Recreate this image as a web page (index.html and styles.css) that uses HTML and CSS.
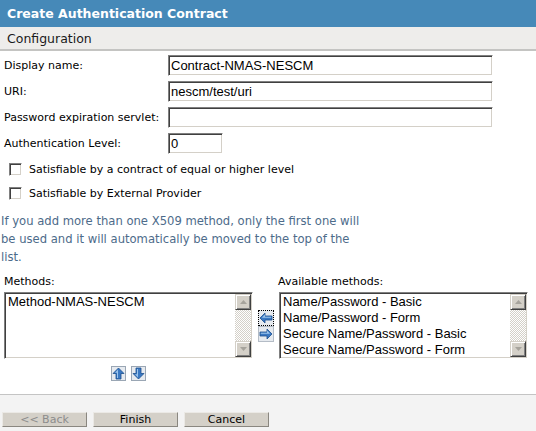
FILE: index.html
```html
<!DOCTYPE html>
<html>
<head>
<meta charset="utf-8">
<title>Create Authentication Contract</title>
<link rel="stylesheet" href="styles.css">
</head>
<body>
<div class="page">
  <div class="title">Create Authentication Contract</div>
  <div class="section">Configuration</div>

  <div class="form">
    <div class="lbl">Display name:</div>
    <div class="field">Contract-NMAS-NESCM</div>
    <div class="lbl">URI:</div>
    <div class="field">nescm/test/uri</div>
    <div class="lbl">Password expiration servlet:</div>
    <div class="field"></div>
    <div class="lbl">Authentication Level:</div>
    <div class="field short">0</div>
  </div>

  <div class="checks">
    <div class="check"><span class="box"></span><span>Satisfiable by a contract of equal or higher level</span></div>
    <div class="check"><span class="box"></span><span>Satisfiable by External Provider</span></div>
  </div>

  <p class="info">If you add more than one X509 method, only the first one will be used and it will automatically be moved to the top of the list.</p>

  <div class="methods">
    <div class="mlabel">Methods:</div>
    <div class="mlabel right">Available methods:</div>

    <div class="list left-list">
      <div class="items">
        <div>Method-NMAS-NESCM</div>
      </div>
      <div class="sbar">
        <span class="sbtn"><svg width="7" height="4" viewBox="0 0 7 4"><path d="M3.5 0 L7 4 H0 Z" fill="#a6a39c"/></svg></span>
        <span class="track"></span>
        <span class="sbtn"><svg width="7" height="4" viewBox="0 0 7 4"><path d="M0 0 H7 L3.5 4 Z" fill="#a6a39c"/></svg></span>
      </div>
    </div>

    <div class="move">
      <span class="mbtn focus"><svg width="14" height="14" viewBox="0 0 14 14"><path d="M1 7 L6 2 V5 H13 V9 H6 V12 Z" fill="#3a78c2" stroke="#1c4f8e" stroke-width="0.8"/><path d="M3 6.5 L6 3.6 V5.8 H12.2 V6.8 H3.5 Z" fill="#9cc4ec"/></svg></span>
      <span class="mbtn"><svg width="14" height="14" viewBox="0 0 14 14"><path d="M13 7 L8 2 V5 H1 V9 H8 V12 Z" fill="#3a78c2" stroke="#1c4f8e" stroke-width="0.8"/><path d="M11 6.5 L8 3.6 V5.8 H1.8 V6.8 H10.5 Z" fill="#9cc4ec"/></svg></span>
    </div>

    <div class="list right-list">
      <div class="items">
        <div>Name/Password - Basic</div>
        <div>Name/Password - Form</div>
        <div>Secure Name/Password - Basic</div>
        <div>Secure Name/Password - Form</div>
      </div>
      <div class="sbar">
        <span class="sbtn"><svg width="7" height="4" viewBox="0 0 7 4"><path d="M3.5 0 L7 4 H0 Z" fill="#a6a39c"/></svg></span>
        <span class="track"></span>
        <span class="sbtn"><svg width="7" height="4" viewBox="0 0 7 4"><path d="M0 0 H7 L3.5 4 Z" fill="#a6a39c"/></svg></span>
      </div>
    </div>

    <div class="order">
      <span class="obtn"><svg width="13" height="13" viewBox="0 0 13 13"><path d="M6.5 1 L12 6.5 H9 V12 H4 V6.5 H1 Z" fill="#3a78c2" stroke="#1c4f8e" stroke-width="0.8"/><path d="M6 2.5 L3 5.8 H5 V11 H6 Z" fill="#9cc4ec"/></svg></span>
      <span class="obtn"><svg width="13" height="13" viewBox="0 0 13 13"><path d="M6.5 12 L12 6.5 H9 V1 H4 V6.5 H1 Z" fill="#3a78c2" stroke="#1c4f8e" stroke-width="0.8"/><path d="M6 10.5 L3 7.2 H5 V2 H6 Z" fill="#9cc4ec"/></svg></span>
    </div>
  </div>

  <div class="footer">
    <button class="btn disabled">&lt;&lt; Back</button>
    <button class="btn">Finish</button>
    <button class="btn">Cancel</button>
  </div>
</div>
</body>
</html>
```

FILE: styles.css
```css
body {
  margin: 0;
  background: #fff;
}

.page {
  width: 536px;
  height: 431px;
  overflow: hidden;
  display: flex;
  flex-direction: column;
  font-family: "DejaVu Sans", Verdana, sans-serif;
  font-size: 11px;
  color: #000;
  background: #fff;
}

.title {
  height: 27px;
  line-height: 27px;
  background: #4689b8;
  color: #fff;
  font-weight: bold;
  font-size: 12.5px;
  padding-left: 7px;
  flex: none;
}

.section {
  height: 22px;
  line-height: 23px;
  background: #eeedeb;
  border-bottom: 2px solid #c4c4c2;
  font-size: 12.5px;
  padding-left: 7px;
  color: #1a1a1a;
  flex: none;
}

.form {
  display: grid;
  grid-template-columns: 164px auto;
  row-gap: 5px;
  padding: 4px 0 0 4px;
  align-items: center;
  justify-items: start;
}

.field {
  box-sizing: border-box;
  height: 21px;
  width: 325px;
  border: 1px solid;
  border-color: #808080 #fff #fff #808080;
  box-shadow: inset 1px 1px #404040, inset -1px -1px #d4d0c8;
  font-family: "Liberation Sans", Arial, sans-serif;
  font-size: 13px;
  line-height: 19px;
  padding-left: 2px;
  white-space: nowrap;
}

.field.short {
  width: 55px;
}

.checks {
  padding: 3px 0 0 9px;
}

.check {
  height: 24px;
  display: flex;
  align-items: center;
  gap: 7px;
}

.box {
  width: 13px;
  height: 13px;
  box-sizing: border-box;
  border: 1px solid;
  border-color: #808080 #fff #fff #808080;
  box-shadow: inset 1px 1px #404040, inset -1px -1px #d4d0c8;
  background: #fff;
  flex: none;
}

.info {
  margin: 7px 0 0;
  padding-left: 1px;
  width: 366px;
  font-size: 11.6px;
  line-height: 18px;
  color: #4d6b8a;
}

.methods {
  display: grid;
  grid-template-columns: 249px 16px 249px;
  grid-template-rows: 18px 67px auto;
  column-gap: 5px;
  padding: 8px 0 0 4px;
}

.mlabel {
  line-height: 16px;
  grid-row: 1;
  grid-column: 1;
}

.mlabel.right {
  grid-column: 3;
  margin-left: -1px;
}

.list {
  grid-row: 2;
  box-sizing: border-box;
  height: 67px;
  border: 1px solid;
  border-color: #808080 #fff #fff #808080;
  box-shadow: inset 1px 1px #404040, inset -1px -1px #d4d0c8;
  padding: 1px;
  display: flex;
  background: #fff;
}

.left-list {
  grid-column: 1;
}

.right-list {
  grid-column: 3;
}

.items {
  flex: 1;
  font-family: "Liberation Sans", Arial, sans-serif;
  font-size: 13px;
  line-height: 16px;
  padding: 0 0 0 2px;
  white-space: nowrap;
  overflow: hidden;
}

.sbar {
  width: 16px;
  display: flex;
  flex-direction: column;
}

.track {
  flex: 1;
  background: repeating-conic-gradient(#d4d0c8 0 25%, #fff 0 50%) 0 0 / 2px 2px;
}

.sbtn {
  height: 16px;
  box-sizing: border-box;
  background: #d4d0c8;
  border: 1px solid;
  border-color: #d4d0c8 #404040 #404040 #d4d0c8;
  box-shadow: inset 1px 1px #fff, inset -1px -1px #808080;
  display: flex;
  align-items: center;
  justify-content: center;
}

.move {
  grid-row: 2;
  grid-column: 2;
  display: flex;
  flex-direction: column;
  justify-content: center;
}

.mbtn {
  width: 16px;
  height: 16px;
  box-sizing: border-box;
  border: 1px solid #b4bcc6;
  background: #e6eaef;
  display: flex;
  align-items: center;
  justify-content: center;
}

.mbtn.focus {
  border: 1px dotted #000;
}

.order {
  grid-row: 3;
  grid-column: 1;
  display: flex;
  justify-content: center;
  gap: 5px;
  padding-top: 7px;
}

.obtn {
  width: 15px;
  height: 15px;
  box-sizing: border-box;
  border: 1px solid #9aa6b4;
  background: #e6eaef;
  display: flex;
  align-items: center;
  justify-content: center;
}

.footer {
  margin-top: 13px;
  border-top: 1px solid #c4c4c4;
  background: #f3f3f3;
  flex: 1;
  padding: 17px 0 0 2px;
  display: flex;
  gap: 6px;
  align-items: flex-start;
}

.btn {
  width: 85px;
  height: 15px;
  box-sizing: border-box;
  background: #d4d0c8;
  border: 1px solid;
  border-color: #ebe9e5 #8a8780 #8a8780 #ebe9e5;
  font-family: "DejaVu Sans", Verdana, sans-serif;
  font-size: 11px;
  line-height: 13px;
  text-align: center;
  padding: 0;
  color: #000;
}

.btn.disabled {
  color: #8c8c8c;
}
```
